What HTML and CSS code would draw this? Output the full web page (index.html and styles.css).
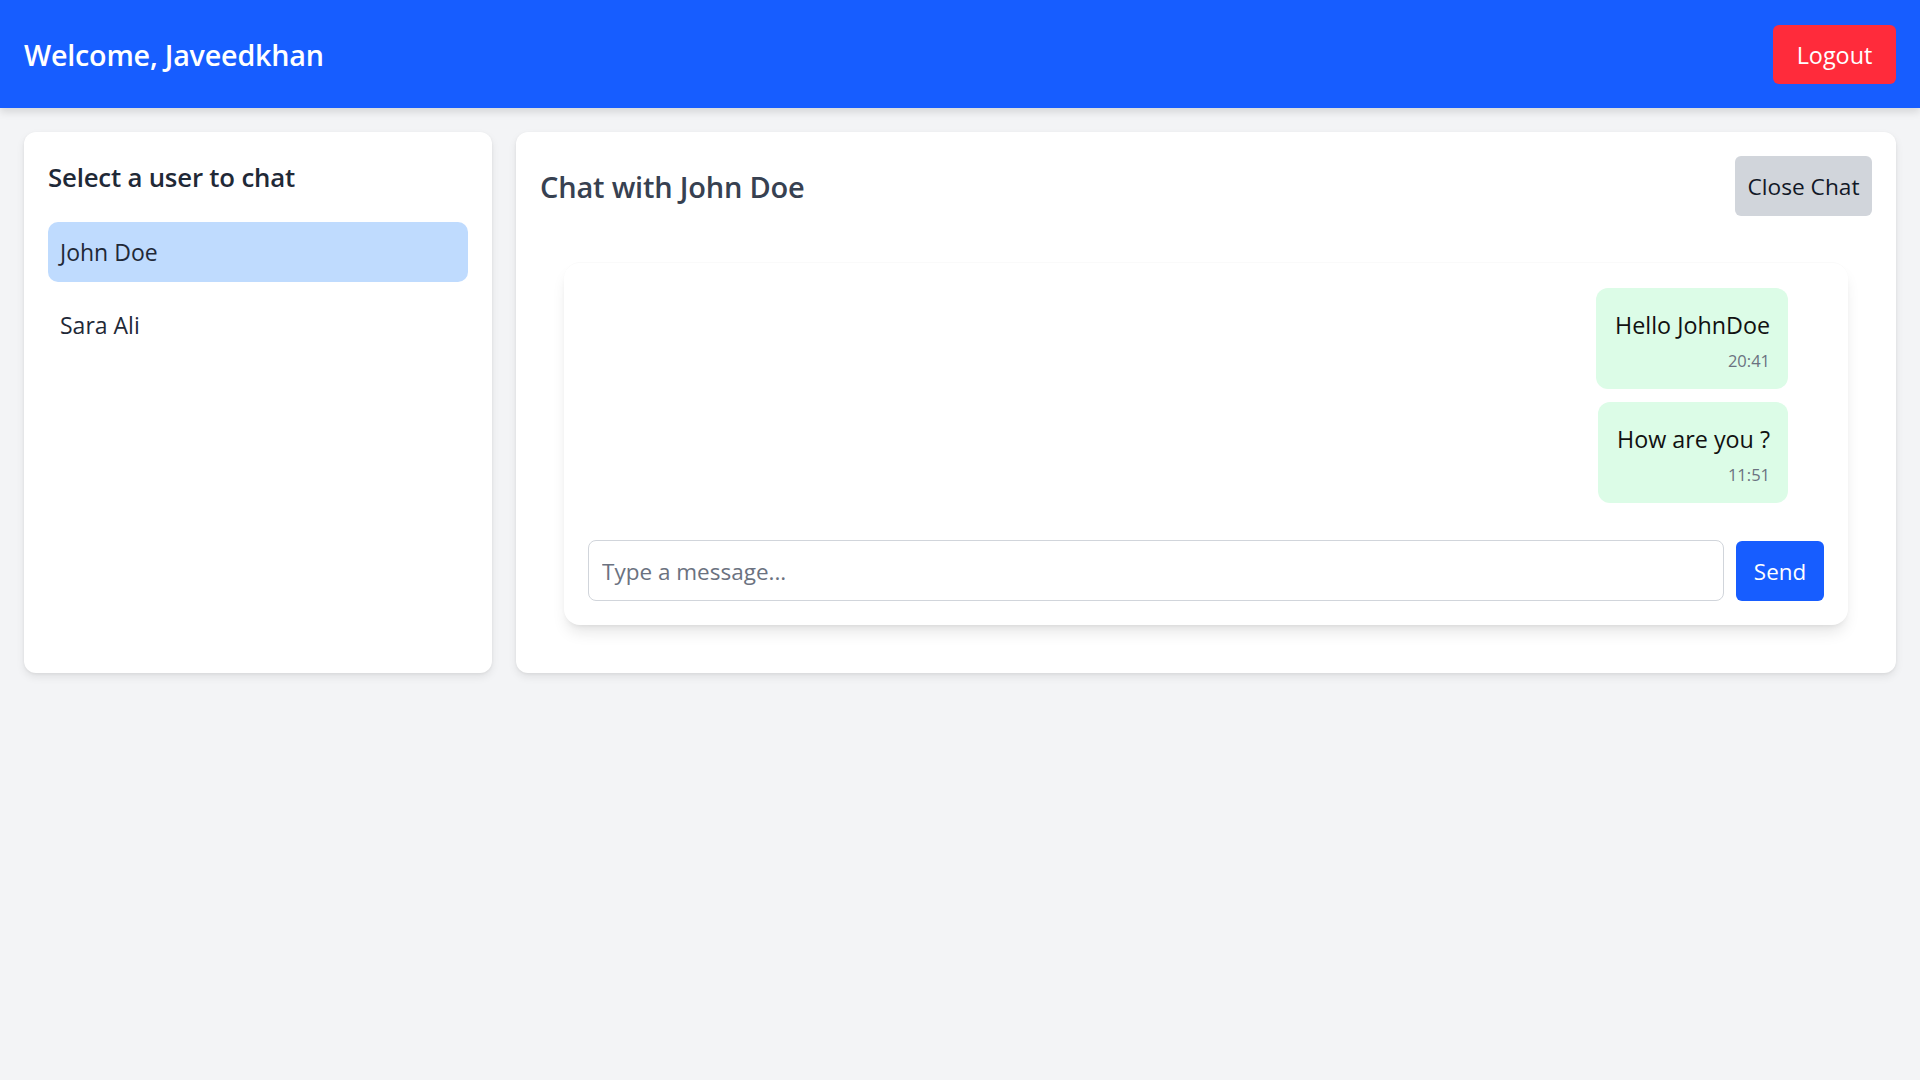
FILE: index.html
```html
<!DOCTYPE html>
<html lang="en">
<head>
<meta charset="utf-8">
<title>Chat</title>
<link rel="stylesheet" href="styles.css">
</head>
<body>
<header class="topbar">
  <h1 class="welcome">Welcome, Javeedkhan</h1>
  <button class="btn btn-logout">Logout</button>
</header>
<main class="layout">
  <aside class="card users">
    <h2 class="users-title">Select a user to chat</h2>
    <ul class="user-list">
      <li class="user-item active">John Doe</li>
      <li class="user-item">Sara Ali</li>
    </ul>
  </aside>
  <section class="card chat">
    <div class="chat-head">
      <h2 class="chat-title">Chat with John Doe</h2>
      <button class="btn btn-close">Close Chat</button>
    </div>
    <div class="chat-box">
      <div class="messages">
        <div class="bubble">
          <div class="bubble-text">Hello JohnDoe</div>
          <div class="bubble-time">20:41</div>
        </div>
        <div class="bubble">
          <div class="bubble-text">How are you ?</div>
          <div class="bubble-time">11:51</div>
        </div>
      </div>
      <div class="composer">
        <input class="composer-input" type="text" placeholder="Type a message...">
        <button class="btn btn-send">Send</button>
      </div>
    </div>
  </section>
</main>
</body>
</html>
```
FILE: styles.css
```css
* { box-sizing: border-box; }
html, body { margin: 0; padding: 0; }
body {
  background: #f3f4f6;
  font-family: "Open Sans", "Noto Sans", sans-serif;
  color: #1f2937;
  min-height: 100vh;
}
h1, h2, ul { margin: 0; padding: 0; }
ul { list-style: none; }

.btn {
  border: none;
  font-family: inherit;
  cursor: pointer;
}

.topbar {
  height: 108px;
  background: #175dff;
  display: flex;
  align-items: center;
  justify-content: space-between;
  padding: 0 24px;
  box-shadow: 0 4px 8px rgba(0,0,0,0.12);
}
.welcome {
  color: #fff;
  font-size: 28.7px;
  font-weight: 600;
  letter-spacing: -0.2px;
}
.btn-logout {
  width: 123px;
  height: 59px;
  background: #ff2b3b;
  color: #fff;
  font-size: 23.4px;
  border-radius: 6px;
  padding-top: 2px;
}

.layout {
  display: grid;
  grid-template-columns: 468px 1fr;
  gap: 24px;
  padding: 24px;
}
.card {
  background: #fff;
  border-radius: 12px;
  box-shadow: 0 4px 8px rgba(0,0,0,0.08), 0 1px 3px rgba(0,0,0,0.06);
  padding: 24px;
  min-height: 541px;
}

.users-title {
  font-size: 25.8px;
  font-weight: 600;
  line-height: 40px;
  color: #1f2937;
  margin-top: 1px;
  margin-bottom: 25px;
  letter-spacing: -0.2px;
}
.user-list {
  display: flex;
  flex-direction: column;
  gap: 13px;
}
.user-item {
  height: 60px;
  display: flex;
  align-items: center;
  padding: 0 12px;
  font-size: 23px;
  border-radius: 10px;
  color: #1f2937;
}
.user-item.active { background: #bfdbfe; }

.chat-head {
  height: 60px;
  display: flex;
  align-items: center;
  justify-content: space-between;
}
.chat-title {
  font-size: 29px;
  font-weight: 600;
  color: #374151;
  letter-spacing: -0.2px;
  margin-top: 1px;
}
.btn-close {
  width: 137px;
  height: 60px;
  background: #d1d5db;
  color: #111827;
  font-size: 22.7px;
  border-radius: 6px;
}

.chat-box {
  margin: 46px 24px 24px;
  padding: 24px;
  border-radius: 16px;
  background: #fff;
  box-shadow: 0 10px 15px -3px rgba(0,0,0,0.1), 0 4px 6px -4px rgba(0,0,0,0.1);
  border-top: 1px solid #fafafa;
}
.messages {
  display: flex;
  flex-direction: column;
  align-items: flex-end;
  gap: 13px;
  padding: 1px 36px 0 0;
  margin-bottom: 37px;
}
.bubble {
  background: #dcfce7;
  border-radius: 12px;
  padding: 17px 18px 12px 19px;
  text-align: right;
  color: #111;
}
.bubble-text {
  font-size: 23.3px;
  line-height: 40px;
}
.bubble-time {
  font-size: 16.5px;
  line-height: 32px;
  color: #6b7280;
}

.composer {
  display: flex;
  gap: 12px;
  align-items: center;
}
.composer-input {
  flex: 1;
  height: 61px;
  border: 1px solid #d1d5db;
  border-radius: 8px;
  padding: 2px 13px 0;
  font-family: inherit;
  font-size: 22.5px;
  color: #111;
  outline: none;
}
.composer-input::placeholder { color: #6b7280; }
.btn-send {
  width: 88px;
  height: 60px;
  background: #175dff;
  color: #fff;
  font-size: 22.4px;
  border-radius: 6px;
  padding-top: 2px;
}
```
